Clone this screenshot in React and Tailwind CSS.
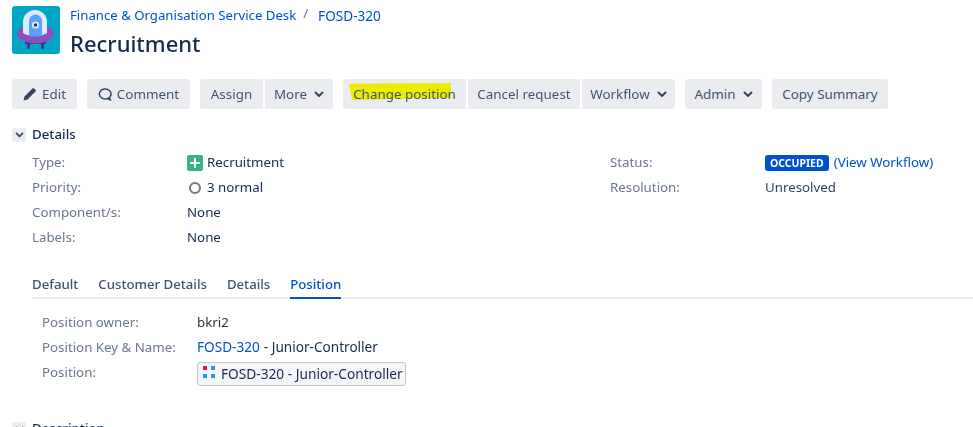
import React from 'react';

const fontStack = 'font-["Noto_Sans","Open_Sans",sans-serif]';

function Chevron({ className = 'ml-[7px] w-[10px] h-[7px] text-[#344563]' }) {
  return (
    <svg viewBox="0 0 10 7" className={className} fill="none" stroke="currentColor" strokeWidth="2" strokeLinecap="round" strokeLinejoin="round">
      <path d="M1.5 1.5 5 5l3.5-3.5" />
    </svg>
  );
}

function Btn({ children, className = '' }) {
  return (
    <div className={`relative h-[30px] flex items-center justify-center bg-[#ebecf0] text-[13.4px] text-[#42526e] whitespace-nowrap ${className}`}>
      {children}
    </div>
  );
}

function Row({ label, children, labelClass = '', className = '' }) {
  return (
    <div className={`flex h-[25px] items-center text-[13.3px] ${className}`}>
      <div className={`w-[155px] shrink-0 text-[#6b778c] ${labelClass}`}>{label}</div>
      <div className="flex items-center text-[#172b4d]">{children}</div>
    </div>
  );
}

function Logo() {
  return (
    <svg viewBox="0 0 48 48" className="w-12 h-12 shrink-0">
      <rect width="48" height="48" rx="3" fill="#00a7c4" />
      <path d="M13 36h21v2h-2l-.5 5h-2l-.5-5H18l-.5 5h-2l-.5-5h-2z" fill="#403294" />
      <ellipse cx="23.5" cy="28" rx="18.5" ry="9.5" fill="#8b4fc0" />
      <path d="M11 27V16a12 12 0 0 1 24 0v11c-5 4-19 4-24 0z" fill="#deebff" />
      <path d="M17 30V15a6.5 6.5 0 0 1 13 0v15c-3 1-10 1-13 0z" fill="#4c9aff" opacity=".9" />
      <circle cx="23.5" cy="19" r="3.6" fill="#deebff" />
      <circle cx="23.5" cy="19" r="1.7" fill="#253858" />
    </svg>
  );
}

export default function App() {
  return (
    <div className={`h-[427px] overflow-hidden bg-white ${fontStack}`}>
      {/* header */}
      <div className="flex pl-3 pt-[6px] gap-[10px]">
        <Logo />
        <div>
          <div className="flex h-[20px] items-center text-[13.2px] text-[#0052cc]">
            <span>Finance &amp; Organisation Service Desk</span>
            <span className="ml-[7px] mr-[8px] text-[#6b778c] -mt-1">/</span>
            <span className="ml-[2px] text-[13.6px]">FOSD-320</span>
          </div>
          <div className="text-[22px] leading-[34px] font-medium text-[#172b4d]">Recruitment</div>
        </div>
      </div>

      {/* toolbar */}
      <div className="flex pl-3 mt-[19px] gap-[10px]">
        <Btn className="w-[65px] rounded-[3px]">
          <svg viewBox="0 0 14 14" className="w-[14px] h-[14px] mr-[5px] text-[#344563]" fill="currentColor">
            <path d="M.5 13.5 1.5 9.5 9.5 1.5a1.2 1.2 0 0 1 1.7 0l1.3 1.3a1.2 1.2 0 0 1 0 1.7L4.5 12.5z" />
          </svg>
          Edit
        </Btn>
        <Btn className="w-[103px] rounded-[3px]">
          <svg viewBox="0 0 14 14" className="w-[14px] h-[14px] mr-[5px] text-[#344563]" fill="none" stroke="currentColor" strokeWidth="1.5">
            <path d="M9.5 11.6A5.8 5 0 1 0 7 12c1 0 1.8-.1 2.5-.4l2.7 1.2-.8-2" />
          </svg>
          Comment
        </Btn>
        <div className="flex gap-[2px]">
          <Btn className="w-[63px] rounded-l-[3px]">Assign</Btn>
          <Btn className="w-[68px] rounded-r-[3px]">More<Chevron /></Btn>
        </div>
        <div className="flex gap-[2px]">
          <Btn className="w-[123px] rounded-l-[3px]">
            <span className="absolute left-[6px] top-[4px] w-[102px] h-[17px] bg-[#ffff00] mix-blend-multiply [clip-path:polygon(0_5%,100%_0,100%_88%,55%_92%,3%_100%)]" />
            <span className="relative">Change position</span>
          </Btn>
          <Btn className="w-[112px]">Cancel request</Btn>
          <Btn className="w-[93px] rounded-r-[3px]">Workflow<Chevron /></Btn>
        </div>
        <Btn className="w-[77px] rounded-[3px]">Admin<Chevron /></Btn>
        <Btn className="w-[116px] rounded-[3px]">Copy Summary</Btn>
      </div>

      {/* details */}
      <div className="flex items-center pl-3 mt-[16px] h-[20px]">
        <div className="w-[14px] h-[14px] rounded-[2px] bg-[#ebecf0] flex items-center justify-center">
          <Chevron className="w-[9px] h-[6px] text-[#344563]" />
        </div>
        <div className="ml-[6px] text-[13.3px] font-medium text-[#172b4d]">Details</div>
      </div>
      <div className="flex pl-8 mt-[5px]">
        <div className="w-[578px]">
          <Row label="Type:">
            <span className="mr-[4px] w-4 h-4 rounded-[2px] bg-[#36b37e] flex items-center justify-center">
              <svg viewBox="0 0 10 10" className="w-[10px] h-[10px]" stroke="#fff" strokeWidth="2"><path d="M5 0v10M0 5h10" /></svg>
            </span>
            Recruitment
          </Row>
          <Row label="Priority:">
            <span className="ml-[2px] mr-[6px] w-3 h-3 rounded-full border-2 border-[#6b778c]" />
            3 normal
          </Row>
          <Row label="Component/s:">None</Row>
          <Row label="Labels:">None</Row>
        </div>
        <div>
          <Row label="Status:">
            <span className="h-[16px] px-[5px] rounded-[3px] bg-[#0052cc] text-white text-[10.5px] leading-[16px] font-bold">OCCUPIED</span>
            <span className="ml-[5px] text-[#0052cc]">(View Workflow)</span>
          </Row>
          <Row label="Resolution:"><span className="text-[#344563]">Unresolved</span></Row>
        </div>
      </div>

      {/* tabs */}
      <div className="ml-8 mt-[21px] flex gap-5 h-[28px] border-b-2 border-[#ebecf0] text-[13.2px] font-medium text-[#42526e]">
        <div className="h-[28px] leading-[26px]">Default</div>
        <div className="h-[28px] leading-[26px]">Customer Details</div>
        <div className="h-[28px] leading-[26px]">Details</div>
        <div className="h-[28px] leading-[26px] text-[#0052cc] border-b-2 border-[#0052cc]">Position</div>
      </div>

      <div className="pl-[42px] mt-[11px]">
        <Row label="Position owner:"><span className="text-[#333]">bkri2</span></Row>
        <Row label="Position Key &amp; Name:">
          <span className="text-[#0052cc] text-[13.6px]">FOSD-320</span>
          <span className="ml-[4px] text-[13.6px]">- Junior-Controller</span>
        </Row>
        <Row label="Position:" className="!items-start" labelClass="mt-[3px]">
          <div className="mt-[2px] h-[24px] w-[209px] flex items-center gap-[6px] pl-[5px] rounded-[3px] border border-[#c1c7d0] bg-[#f4f5f7] text-[13.7px] text-[#172b4d] whitespace-nowrap">
            <span className="-mt-[4px] grid grid-cols-2 gap-[4px] shrink-0">
              <span className="w-1 h-1 bg-[#d6145f]" />
              <span className="w-1 h-1 bg-[#2196f3]" />
              <span className="w-1 h-1 bg-[#2196f3]" />
              <span className="w-1 h-1 bg-[#2196f3]" />
            </span>
            FOSD-320 - Junior-Controller
          </div>
        </Row>
      </div>

      <div className="flex items-center pl-3 mt-[34px] h-[20px]">
        <div className="w-[14px] h-[14px] rounded-[2px] bg-[#ebecf0] flex items-center justify-center">
          <Chevron className="w-[9px] h-[6px] text-[#344563]" />
        </div>
        <div className="ml-[6px] text-[13.3px] font-medium text-[#172b4d]">Description</div>
      </div>
    </div>
  );
}
